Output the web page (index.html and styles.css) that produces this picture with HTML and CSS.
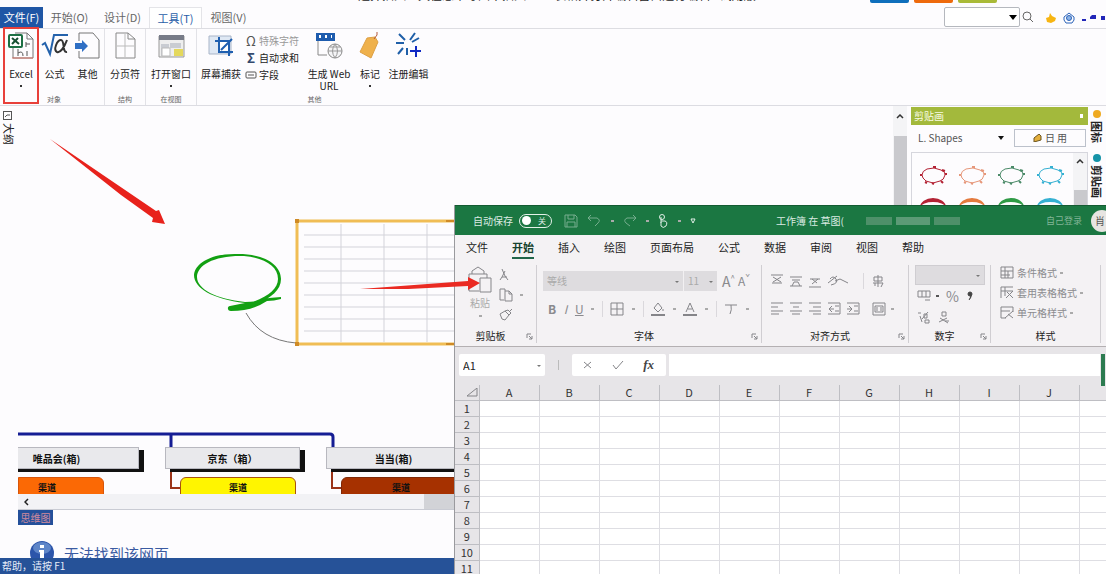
FILE: index.html
```html
<!DOCTYPE html>
<html lang="zh-CN">
<head>
<meta charset="utf-8">
<title>插入 Excel 表格</title>
<meta name="viewport" content="width=device-width, initial-scale=1">
<link rel="stylesheet" href="styles.css">
</head>
<body>
<div class="app">
  <header class="top">
    <div class="caption"><span class="caption-text">选择插入工具在思维导图中插入Excel表格并打开编辑窗口进行编辑 - 试用版</span>
      <div class="chips"><i class="chip blue"></i><i class="chip orange"></i><i class="chip green"></i></div>
    </div>
    <nav class="menu">
      <button class="file">文件(F)</button>
      <button>开始(O)</button>
      <button>设计(D)</button>
      <button class="on">工具(T)</button>
      <button>视图(V)</button>
      <div class="search">
        <select aria-label="搜索"><option></option></select>
        <svg width="12" height="12" viewBox="0 0 12 12" fill="none" stroke="#666"><circle cx="5" cy="5" r="4"/><path d="M8 8l3 3"/></svg>
      </div>
      <div class="tray">
        <svg width="10" height="10" viewBox="0 0 10 10"><path d="M4 0l2 3 4 2-1 3-4 2-4-1-1-4 3-1z" fill="#f7b512"/></svg>
        <svg width="12" height="12" viewBox="0 0 12 12" fill="none" stroke="#2b62b8"><path d="M6 1l5 4v3l-2 3H3L1 8V5z"/><circle cx="6" cy="6" r="2.5" fill="#8cb4e8"/></svg>
        <svg width="24" height="10" viewBox="0 0 24 10" fill="#2226b8"><path d="M0 6h4v2H0zM8 4l2-2h4v4H8zM19 3h4v4h-4z"/></svg>
      </div>
    </nav>
  </header>

  <section class="ribbon">
    <div class="group first">
      <div class="tools">
        <button class="tool marked">
          <svg class="ico" viewBox="0 0 28 28" fill="none"><path d="M8 1h12l6 6v19H6V16" stroke="#777"/><path d="M20 1v6h6" stroke="#777"/><path d="M5 26h21" stroke="#d9766a"/><rect x="2" y="3" width="13" height="12" rx="1" fill="#fff" stroke="#1d7044" stroke-width="2"/><path d="M5 6l7 6M11 6l-6 6" stroke="#174f32" stroke-width="2"/><path d="M19 10v5m0-3h4M11 17v7m0-3q5-3 5 3M20 19v5" stroke="#555"/></svg>
          <span>Excel</span><i class="dot"></i></button>
        <button class="tool">
          <svg class="ico" viewBox="0 0 28 28" fill="none"><path d="M1 13l3-2 5 11L13 3h14" stroke="#2462ac" stroke-width="2"/><path d="M26 8c-3 8-7 13-10 12-4-2 0-12 4-12 4 0 1 13 6 12" stroke="#333" stroke-width="2"/></svg>
          <span>公式</span></button>
        <button class="tool">
          <svg class="ico" viewBox="0 0 28 28" fill="none"><path d="M5 9V1h14l6 7v18H5v-7" stroke="#777"/><path d="M1 11h7V8l6 6-6 6v-3H1z" fill="#2f6fc4"/></svg>
          <span>其他</span></button>
      </div>
      <div class="name">对象</div>
    </div>
    <div class="group">
      <div class="tools"><button class="tool">
        <svg class="ico" viewBox="0 0 28 28" fill="none" stroke="#888"><path d="M5 1h12l7 6v19H5zM17 1v6h7"/><path d="M14 2v23M6 14h17" stroke="#bbb"/></svg>
        <span>分页符</span></button></div>
      <div class="name">结构</div>
    </div>
    <div class="group">
      <div class="tools"><button class="tool">
        <svg class="ico" viewBox="0 0 28 28"><path d="M2 4h25v21H2z" fill="#eee" stroke="#999"/><path d="M2 3h25v5H2z" fill="#777b88"/><path d="M4 12h8v12H4zM13 11h11v5H13z" fill="#c9ccd2"/><path d="M5 16h8v8H5z" fill="#fff" stroke="#bbb"/><path d="M17 17h9v7h-9z" fill="#e4d85c"/></svg>
        <span>打开窗口</span><i class="dot"></i></button></div>
      <div class="name">在视图</div>
    </div>
    <div class="group last">
      <div class="tools">
        <button class="tool w-shot">
          <svg class="ico" viewBox="0 0 28 28" fill="none"><path d="M2 4h22v18H2z" fill="#dfe8f4" stroke="#a9b5c8"/><path d="M11 9h11v10H11z" fill="#fff"/><path d="M12 5v15h14M8 9h14v15M14 18l11-11" stroke="#1f5fb0" stroke-width="2"/></svg>
          <span>屏幕捕获</span></button>
        <div class="rows">
          <button class="row dim"><b>Ω</b>特殊字符</button>
          <button class="row"><b>Σ</b>自动求和</button>
          <button class="row"><svg width="12" height="10" viewBox="0 0 12 10" fill="none" stroke="#555"><rect x="1" y="2" width="10" height="6" rx="1"/><path d="M3 5h6"/></svg>字段</button>
        </div>
        <button class="tool w-web">
          <svg class="ico" viewBox="0 0 28 28" fill="none"><path d="M3 9v14h9" stroke="#888"/><path d="M1 1h19v8H1z" fill="#1e5cae"/><path d="M4 3h2v3H4zm6 0h2v3h-2zm6 0h1v3h-1z" fill="#fff"/><circle cx="20" cy="19" r="7" stroke="#888" fill="#f4f4f6"/><path d="M13 19h14M20 12q-5 7 0 14M20 12q5 7 0 14M15 15h10" stroke="#999"/></svg>
          <span class="two">生成 Web<br>URL</span></button>
        <button class="tool w-tag">
          <svg class="ico" viewBox="0 0 28 28" fill="none"><path d="M11 6l8-1 3 5-7 16-11-6z" fill="#efb14c" stroke="#dda045"/><path d="M18 7l3-4V0" stroke="#b35a3c"/></svg>
          <span>标记</span><i class="dot"></i></button>
        <button class="tool w-edit">
          <svg class="ico" viewBox="0 0 28 28" fill="none" stroke="#1f5fa8" stroke-width="2"><path d="M4 2l6 6M20 1l-5 7M1 11h8M24 6l-7 4M8 16l-5 6M12 16v7"/><path d="M21 14v11M15 19h11" stroke="#1029c4"/></svg>
          <span>注册编辑</span></button>
      </div>
      <div class="name">其他</div>
    </div>
  </section>

  <main class="work">
    <aside class="rail left"><svg width="9" height="9" viewBox="0 0 9 9" fill="none" stroke="#555"><rect x=".5" y=".5" width="8" height="8"/><path d="M2 6l2-2h3"/></svg><span>大纲</span></aside>
    <div class="center">
      <div class="canvas">
        <svg class="draw" width="875" height="388" viewBox="18 106 875 388" fill="none">
          <path d="M244 256c-29-1-47 9-47 21 0 12 19 22 48 25q15 0 24-4l12-1v2q-7 2-14 2-15 10-36 10c-4 0-4-5-1-5l15-3C212 299 194 288 194 275c1-12 18-22 44-21 27 0 43 11 43 25 0 11-10 19-23 24l-5-1c16-6 25-14 25-23 0-13-14-21-34-23z" fill="#12a012"/>
          <path d="M246 313q15 27 50 30" stroke="#777"/>
          <path d="M304 235h150M304 247h150M304 259h150M304 271h150M304 283h150M304 295h150M304 307h150M304 319h150M304 331h150M341 224v118M384 224v118M427 224v118" stroke="#d3d3da"/>
          <path d="M470 221H297v123h173" stroke="#f0bd55" stroke-width="3"/>
          <path d="M295 219h4v4h-4zM295 342h4v4h-4zM446 220h8v2h-8zM446 343h8v2h-8z" fill="#cf8a26"/>
          <path d="M18 434h312q3 0 3 3v10M171 434v13" stroke="#151d94" stroke-width="3"/>
          <path d="M171 470v18h9M332 470v18h9" stroke="#9b3318" stroke-width="2"/>
        </svg>
        <div class="node n1">唯品会(箱)</div>
        <div class="node n2">京东（箱）</div>
        <div class="node n3">当当(箱)</div>
        <div class="leaf l1">渠道</div>
        <div class="leaf l2">渠道</div>
        <div class="leaf l3">渠道</div>
      </div>
      <div class="hscroll"><button aria-label="向左"><svg width="5" height="8" viewBox="0 0 5 8" fill="none" stroke="#222" stroke-width="1.5"><path d="M4 1L1 4l3 3"/></svg></button><i></i></div>
      <div class="sheets"><button>思维图</button></div>
      <div class="browser">
        <svg width="24" height="24" viewBox="0 0 24 24"><circle cx="12" cy="12" r="12" fill="#2c55aa"/><ellipse cx="12" cy="7" rx="9" ry="6" fill="#5f86c8"/><path d="M10 4h4v3h-4zM9 9h5v9h2v2H8v-2h2v-7H9z" fill="#fff"/></svg>
        <h1>无法找到该网页</h1>
      </div>
    </div>
    <div class="vscroll"><svg width="8" height="5" viewBox="0 0 8 5" fill="none" stroke="#333" stroke-width="1.5"><path d="M1 4l3-3 3 3"/></svg><i></i></div>
    <aside class="panel">
      <div class="panel-head"><span>剪贴画</span><i></i></div>
      <div class="panel-bar">
        <select aria-label="图库"><option>L. Shapes</option></select>
        <button><svg width="9" height="8" viewBox="0 0 9 8"><path d="M1 4l5-4 2 2v4l-7 2z" fill="#e4af3c" stroke="#6b5420"/></svg>日 用</button>
      </div>
      <div class="gallery">
        <div class="shapes">
          <svg class="c1" viewBox="0 0 28 20"><path d="M2 10q0-4 5-6l7-1 7 2q5 2 4 5-1 5-5 6l-7 2-7-2q-4-3-4-6z"/><path class="d" d="M13 2h3M22 5l3 1M25 9h2M21 16l2 2M12 18l2 1M5 17l2 1M0 10h2"/></svg>
          <svg class="c2" viewBox="0 0 28 20"><path d="M2 10q0-4 5-6l7-1 7 2q5 2 4 5-1 5-5 6l-7 2-7-2q-4-3-4-6z"/><path class="d" d="M13 2h3M22 5l3 1M25 9h2M21 16l2 2M12 18l2 1M5 17l2 1M0 10h2"/></svg>
          <svg class="c3" viewBox="0 0 28 20"><path d="M2 10q0-4 5-6l7-1 7 2q5 2 4 5-1 5-5 6l-7 2-7-2q-4-3-4-6z"/><path class="d" d="M13 2h3M22 5l3 1M25 9h2M21 16l2 2M12 18l2 1M5 17l2 1M0 10h2"/></svg>
          <svg class="c4" viewBox="0 0 28 20"><path d="M2 10q0-4 5-6l7-1 7 2q5 2 4 5-1 5-5 6l-7 2-7-2q-4-3-4-6z"/><path class="d" d="M13 2h3M22 5l3 1M25 9h2M21 16l2 2M12 18l2 1M5 17l2 1M0 10h2"/></svg>
          <i class="oval c1"></i><i class="oval c2"></i><i class="oval c3"></i><i class="oval c4"></i>
        </div>
        <div class="vscroll small"><svg width="8" height="5" viewBox="0 0 8 5" fill="none" stroke="#333" stroke-width="1.5"><path d="M1 4l3-3 3 3"/></svg><i></i></div>
      </div>
    </aside>
    <aside class="rail right"><i class="ball amber"></i><span>图标</span><i class="ball teal"></i><span>剪贴画</span></aside>
  </main>
  <footer class="status">帮助，请按 F1</footer>
</div>

<section class="excel">
  <div class="x-title">
    <label class="auto" for="autosave">自动保存</label>
    <span class="toggle"><input type="checkbox" id="autosave"><span>关</span></span>
    <div class="quick">
      <svg width="14" height="14" viewBox="0 0 14 14"><path d="M1 1h10l2 2v10H1zM4 1v4h6V1M3 13V8h8v5"/></svg>
      <svg width="14" height="12" viewBox="0 0 14 12"><path d="M1 3h9q4 2 1 5l-3 3M1 3l3-3M1 3l3 3"/></svg><i class="caret"></i>
      <svg width="14" height="12" viewBox="0 0 14 12"><path d="M13 3H4Q0 5 3 8l4 3M13 3l-3-3M13 3l-3 3"/></svg><i class="caret"></i>
      <svg class="bright" width="10" height="14" viewBox="0 0 10 14"><circle cx="4" cy="3" r="2.500"/><path d="M3 3v6M3 7h4q3 1 1 5-3 3-5 0V8"/></svg><i class="caret"></i>
      <svg class="bright" width="6" height="6" viewBox="0 0 6 6"><path d="M1 1h4L3 5z"/></svg>
    </div>
    <div class="doc">工作簿 在 草图(</div>
    <div class="mask"><i></i><i></i><i></i></div>
    <div class="user">自己登录</div>
    <div class="avatar">肖</div>
  </div>
  <nav class="x-tabs">
    <button>文件</button><button class="on">开始</button><button>插入</button><button>绘图</button><button>页面布局</button><button>公式</button><button>数据</button><button>审阅</button><button>视图</button><button>帮助</button>
  </nav>
  <div class="x-ribbon">
    <div class="xg clip">
      <div class="xbody">
        <button class="paste"><svg width="26" height="28" viewBox="0 0 26 28"><path d="M2 8h3V5l6-4 6 4v3h3v4M2 8v17h10M5 8h12"/><path d="M13 12h11v14H13z"/></svg><span>粘贴</span><i class="caret"></i></button>
        <div class="stack">
          <svg width="10" height="14" viewBox="0 0 10 14"><path d="M3 1l3 7 3 4M6 3L3 9l-2 3M3 9h5"/></svg>
          <span><svg width="14" height="14" viewBox="0 0 14 14"><path d="M6 3V1H1v11h4M6 3h4l3 3v7H6zM10 3v3h3"/></svg><i class="caret"></i></span>
          <svg width="14" height="13" viewBox="0 0 14 13"><path d="M1 6l5-3 4 4-4 5-3-1zM6 3l4 4 2-2-3-3zM11 3l2-2"/></svg>
        </div>
      </div>
      <div class="xname"><span>剪贴板</span><svg width="7" height="7" viewBox="0 0 7 7"><path d="M1 5V1h4M3 3l3 3M6 3v3H3"/></svg></div>
    </div>
    <div class="xg font">
      <div class="xbody col">
        <div class="line"><span class="pick fam"><select aria-label="字体"><option>等线</option></select></span><span class="pick size"><select aria-label="字号"><option>11</option></select></span><button class="big">A<sup>^</sup></button><button class="mid">A<sup>ˇ</sup></button></div>
        <div class="line spread">
          <button><b>B</b></button><button><em>I</em></button><button><u>U</u></button><i class="caret"></i><i class="bar"></i>
          <svg width="14" height="14" viewBox="0 0 14 14"><path d="M1 1h12v12H1zM7 1v12M1 7h12"/></svg><i class="caret"></i><i class="bar"></i>
          <svg width="14" height="14" viewBox="0 0 14 14"><path d="M3 6l4-5 4 5-4 4zM12 7v2"/><path d="M0 13h14" stroke-width="2"/></svg><i class="caret"></i>
          <svg width="14" height="14" viewBox="0 0 14 14"><path d="M3 10L7 1l4 9M5 7h4"/><path d="M0 13h14" stroke-width="2"/></svg><i class="caret"></i><i class="bar"></i>
          <svg width="14" height="14" viewBox="0 0 14 14"><path d="M1 3h12M7 3q1 5-1 9"/></svg><i class="caret"></i>
        </div>
      </div>
      <div class="xname"><span>字体</span><svg width="7" height="7" viewBox="0 0 7 7"><path d="M1 5V1h4M3 3l3 3M6 3v3H3"/></svg></div>
    </div>
    <div class="xg align">
      <div class="xbody col">
        <div class="line five">
          <svg width="14" height="14" viewBox="0 0 14 14"><path d="M1 1h12M3 3l8 5M11 3L3 8M2 9h10"/></svg>
          <svg width="14" height="14" viewBox="0 0 14 14"><path d="M1 3h12M3 6h8M5 8h4l2 4M5 8l-2 4M1 12h12"/></svg>
          <svg width="14" height="14" viewBox="0 0 14 14"><path d="M2 5h10M4 5l5 4M10 5l-6 5M1 13h12"/></svg>
          <svg width="22" height="14" viewBox="0 0 22 14"><path d="M1 9l9-7M3 5q3-4 6 0t-5 6M8 7l5-2 8 4"/></svg>
          <i class="bar wide"></i>
          <svg width="14" height="14" viewBox="0 0 14 14"><path d="M3 3h8v4H3zM7 1v12M2 9h10l-2 4M4 9v3"/></svg>
        </div>
        <div class="line five">
          <svg width="14" height="14" viewBox="0 0 14 14"><path d="M1 1h12M1 5h7M1 9h12M1 12h8"/></svg>
          <svg width="14" height="14" viewBox="0 0 14 14"><path d="M1 1h12M4 5h6M1 9h12M3 12h8"/></svg>
          <svg width="14" height="14" viewBox="0 0 14 14"><path d="M1 1h12M5 5h8M1 9h12M5 12h8"/></svg>
          <svg width="14" height="14" viewBox="0 0 14 14"><path d="M1 1h12v11H1M8 4h4M8 9h4M5 4L2 7l3 3M2 7h5"/></svg>
          <svg width="14" height="14" viewBox="0 0 14 14"><path d="M1 1h12v11H1M8 4h4M8 9h4M3 4l3 3-3 3M1 7h5"/></svg>
          <svg class="merge" width="14" height="14" viewBox="0 0 14 14"><path d="M1 1h12v12H1zM3 4h8v6H3zM5 5v4M9 5v4"/></svg><i class="caret"></i>
        </div>
      </div>
      <div class="xname"><span>对齐方式</span><svg width="7" height="7" viewBox="0 0 7 7"><path d="M1 5V1h4M3 3l3 3M6 3v3H3"/></svg></div>
    </div>
    <div class="xg num">
      <div class="xbody col">
        <span class="pick fmt"><select aria-label="数字格式"><option></option></select></span>
        <div class="line nums"><svg width="14" height="12" viewBox="0 0 14 12"><path d="M1 1h12v6H1zM5 1v6M9 1v6M8 10h5"/></svg><i class="caret dark"></i><button class="big">%</button><svg class="comma" width="6" height="10" viewBox="0 0 6 10"><circle cx="3" cy="3" r="2"/><path d="M4 3q1 3-2 6"/></svg></div>
        <div class="line deci"><svg width="14" height="13" viewBox="0 0 14 13"><path d="M1 2h3M3 5l2 6M7 3h3v4H7zM8 9h4v3H8zM11 1L5 8"/></svg><svg width="14" height="13" viewBox="0 0 14 13"><path d="M5 1h4v4H5zM2 11l8-4M3 7l8 5M8 10h4"/></svg></div>
      </div>
      <div class="xname"><span>数字</span><svg width="7" height="7" viewBox="0 0 7 7"><path d="M1 5V1h4M3 3l3 3M6 3v3H3"/></svg></div>
    </div>
    <div class="xg style">
      <div class="xbody col list">
        <button><svg width="14" height="13" viewBox="0 0 14 13"><path d="M1 1h12v11H1zM5 1v11M1 5h12M8 5v7M1 9h9"/></svg>条件格式<i class="caret"></i></button>
        <button><svg width="14" height="13" viewBox="0 0 14 13"><path d="M1 1h12M1 1v11M5 1v9M1 5h12M6 12l7-7M7 6l6 6"/></svg>套用表格格式<i class="caret"></i></button>
        <button><svg width="14" height="13" viewBox="0 0 14 13"><path d="M1 1h12v5M1 1v11h5M1 5h9M5 12l8-7M8 8l5 4"/></svg>单元格样式<i class="caret"></i></button>
      </div>
      <div class="xname"><span>样式</span></div>
    </div>
  </div>
  <div class="fbar">
    <span class="pick cellname"><select aria-label="名称框"><option>A1</option></select></span>
    <i class="grip"></i>
    <div class="fx">
      <svg width="10" height="10" viewBox="0 0 10 10"><path d="M1 2l7 6M8 2L1 8"/></svg>
      <svg width="12" height="10" viewBox="0 0 12 10"><path d="M1 5l3 4 7-8"/></svg>
      <button aria-label="插入函数"><em>fx</em></button>
    </div>
    <input class="formula" type="text" aria-label="编辑栏">
  </div>
  <div class="sheet">
    <table>
      <thead><tr><th class="corner"><svg width="12" height="9" viewBox="0 0 12 9"><path d="M11 0v8H1z"/></svg></th><th>A</th><th>B</th><th>C</th><th>D</th><th>E</th><th>F</th><th>G</th><th>H</th><th>I</th><th>J</th><th></th></tr></thead>
      <tbody>
        <tr><th>1</th><td></td><td></td><td></td><td></td><td></td><td></td><td></td><td></td><td></td><td></td><td></td></tr>
        <tr><th>2</th><td></td><td></td><td></td><td></td><td></td><td></td><td></td><td></td><td></td><td></td><td></td></tr>
        <tr><th>3</th><td></td><td></td><td></td><td></td><td></td><td></td><td></td><td></td><td></td><td></td><td></td></tr>
        <tr><th>4</th><td></td><td></td><td></td><td></td><td></td><td></td><td></td><td></td><td></td><td></td><td></td></tr>
        <tr><th>5</th><td></td><td></td><td></td><td></td><td></td><td></td><td></td><td></td><td></td><td></td><td></td></tr>
        <tr><th>6</th><td></td><td></td><td></td><td></td><td></td><td></td><td></td><td></td><td></td><td></td><td></td></tr>
        <tr><th>7</th><td></td><td></td><td></td><td></td><td></td><td></td><td></td><td></td><td></td><td></td><td></td></tr>
        <tr><th>8</th><td></td><td></td><td></td><td></td><td></td><td></td><td></td><td></td><td></td><td></td><td></td></tr>
        <tr><th>9</th><td></td><td></td><td></td><td></td><td></td><td></td><td></td><td></td><td></td><td></td><td></td></tr>
        <tr><th>10</th><td></td><td></td><td></td><td></td><td></td><td></td><td></td><td></td><td></td><td></td><td></td></tr>
        <tr><th>11</th><td></td><td></td><td></td><td></td><td></td><td></td><td></td><td></td><td></td><td></td><td></td></tr>
      </tbody>
    </table>
  </div>
  <i class="edge"></i>
</section>

<svg class="arrows" width="490" height="300" viewBox="0 0 490 300">
  <path d="M50 139l106 72 3-1 6 14-13-2 1-4-32-23z" fill="#e8221c"/>
  <path d="M360 289l108-8v-4l12 6-12 7v-4l-60 3z" fill="#ea2a22"/>
</svg>
</body>
</html>
```
FILE: styles.css
```css
* { box-sizing: border-box; }
body { margin: 0; height: 100vh; overflow: hidden; position: relative; background: #fdfcfe; color: #222; font: 10px/14px "Noto Sans CJK SC", "Noto Sans", sans-serif; }
button, select, input { font: inherit; color: inherit; border: 0; padding: 0; margin: 0; background: none; border-radius: 0; }
select { appearance: none; }
svg { display: block; flex: none; }
i { font-style: normal; }

.app { height: 100%; display: flex; flex-direction: column; }

.caption { height: 7px; display: flex; justify-content: flex-end; align-items: flex-end; overflow: hidden; }
.caption-text { margin: 0 120px 4px 0; width: 392px; white-space: nowrap; font-size: 12px; line-height: 16px; }
.chips { display: flex; gap: 5px; margin-right: 109px; align-self: flex-start; }
.chip { width: 39px; height: 3px; border-radius: 0 0 2px 2px; }
.chip.blue { background: #0f6fbc; }
.chip.orange { background: #ee6a0c; }
.chip.green { background: #a9ba38; }

.menu { display: flex; height: 22px; border-bottom: 1px solid #dddde2; color: #666; }
.menu button { font-size: 11px; line-height: 21px; width: 53px; }
.menu .file { width: 43px; background: #1f56a5; color: #fff; }
.menu .on { color: #2a5ea8; background: #fff; border: 1px solid #e4e4e8; border-bottom: 0; }
.search { position: relative; margin-left: auto; display: flex; gap: 2px; align-items: flex-start; }
.search select { width: 76px; height: 20px; border: 1px solid #b5b8be; border-radius: 2px; background: #fff; }
.search::after { content: ""; position: absolute; right: 17px; top: 8px; border: 4px solid transparent; border-top: 5px solid #000; border-bottom: 0; }
.search svg { margin-top: 4px; }
.tray { display: flex; align-items: center; gap: 7px; margin-left: 12px; }

.ribbon { display: flex; height: 77px; flex: none; border-bottom: 1px solid #dcdce2; }
.group { display: flex; flex-direction: column; justify-content: space-between; border-right: 1px solid #e2e2e7; padding-top: 3px; }
.group.first { padding-left: 4px; }
.group:nth-child(2) { width: 41px; }
.group:nth-child(3) { width: 51px; }
.group.last { border-right: 0; }
.tools { display: flex; justify-content: center; }
.tool { display: flex; flex-direction: column; align-items: center; width: 33px; white-space: nowrap; line-height: 12px; }
.tool .ico { width: 28px; height: 28px; margin-bottom: 8px; }
.tool.marked { outline: 2px solid #e8403a; outline-offset: -1px; height: 75px; margin: -4px 0 -14px; padding-top: 4px; width: 34px; }
.w-shot { width: 48px; }
.w-web { width: 52px; }
.two { line-height: 12px; }
.w-tag { width: 30px; }
.w-edit { width: 47px; }
.dot { width: 2px; height: 2px; margin-top: 5px; background: #333; }
.rows { display: flex; flex-direction: column; width: 58px; }
.row { display: flex; align-items: center; height: 17px; white-space: nowrap; gap: 2px; }
.row b { width: 12px; font-size: 13px; color: #34496d; }
.row.dim { color: #999; }
.row.dim b { font-weight: 400; color: #555; }
.name { text-align: center; font-size: 7px; line-height: 12px; color: #666; }

.work { flex: 1; min-height: 0; display: flex; }
.rail { width: 18px; flex: none; display: flex; flex-direction: column; align-items: center; gap: 3px; padding-top: 5px; }
.rail.left { align-items: flex-start; padding-left: 3px; }
.rail span { writing-mode: vertical-rl; text-orientation: sideways; font-size: 11px; line-height: 12px; }
.rail.right { padding-top: 4px; font-weight: 700; }
.ball { width: 8px; height: 8px; border-radius: 50%; }
.amber { background: #efaa21; }
.teal { background: #1593a7; margin-top: 8px; }

.center { flex: 1; min-width: 0; display: flex; flex-direction: column; }
.canvas { flex: 1; min-height: 0; position: relative; overflow: hidden; }
.draw { position: absolute; left: 0; top: 0; }
.node, .leaf { position: absolute; text-align: center; font-weight: 700; color: #111; }
.node { height: 22px; line-height: 21px; background: #e9e9ec; border: 1px solid #b8b8bf; box-shadow: 5px 3px 0 #111; }
.n1 { left: -6px; top: 341px; width: 127px; padding-right: 42px; padding-left: 4px; }
.n2 { left: 147px; top: 341px; width: 135px; }
.n3 { left: 308px; top: 341px; width: 135px; }
.leaf { height: 20px; top: 371px; font-size: 9px; line-height: 20px; border: 1px solid; border-radius: 6px 6px 0 0; }
.l1 { left: 0; width: 86px; background: #fb6905; border-color: #d8550a; border-top-left-radius: 0; padding-right: 28px; }
.l2 { left: 162px; width: 116px; background: #fff500; border-color: #a9530d; }
.l3 { left: 323px; width: 120px; background: #a63100; border-color: #7f2806; }
.hscroll { height: 16px; flex: none; display: flex; background: #f2f2f5; border-bottom: 1px solid #c9cbd3; }
.hscroll button { width: 16px; display: flex; align-items: center; justify-content: center; }
.hscroll i { margin-left: 390px; width: 120px; background: #d2d3d7; }
.sheets { height: 16px; flex: none; }
.sheets button { width: 35px; height: 15px; background: #24509a; color: #d08a9c; display: block; line-height: 14px; }
.browser { height: 32px; flex: none; display: flex; gap: 10px; padding: 15px 0 0 12px; overflow: hidden; }
.browser h1 { margin: 0; font-size: 15px; line-height: 26px; font-weight: 400; color: #3b5ba2; }

.vscroll { width: 14px; flex: none; background: #f4f4f6; display: flex; flex-direction: column; align-items: center; padding-top: 8px; gap: 17px; }
.vscroll i { width: 13px; flex: 1; background: #c9c9cd; }
.vscroll.small { padding-top: 6px; gap: 26px; }

.panel { width: 177px; margin: 1px 0 0 4px; flex: none; display: flex; flex-direction: column; }
.panel-head { height: 18px; flex: none; background: #a3b93c; color: #f8fbe3; display: flex; align-items: center; justify-content: space-between; padding: 0 5px 0 3px; }
.panel-head i { width: 3px; height: 4px; background: #fff; }
.panel-bar { position: relative; height: 27px; flex: none; display: flex; gap: 6px; padding: 4px 2px 5px 3px; }
.panel-bar select { flex: 1; padding-left: 4px; color: #555; }
.panel-bar::before { content: ""; position: absolute; left: 87px; top: 11px; border: 3px solid transparent; border-top: 4px solid #111; border-bottom: 0; }
.panel-bar button { width: 72px; height: 18px; border: 1px solid #bcc1cb; display: flex; gap: 3px; align-items: center; justify-content: center; color: #555; }
.gallery { flex: 1; min-height: 0; display: flex; border: 1px solid #d6d6dd; }
.shapes { flex: 1; display: grid; grid-template-columns: repeat(4, 28px); grid-auto-rows: 20px; gap: 13px 11px; padding: 12px 8px; overflow: hidden; }
.shapes svg { width: 28px; height: 20px; fill: none; stroke: currentColor; }
.shapes .d { stroke-width: 2; }
.oval { width: 26px; height: 18px; border: 1px solid currentColor; border-top-width: 4px; border-radius: 50%; }
.c1 { color: #b32234; }
.c2 { color: #e6977a; }
.c3 { color: #4b8a68; }
.c4 { color: #35b0d2; }
.oval.c2 { color: #e47a3e; }
.oval.c3 { color: #2f9a45; }

.status { height: 16px; flex: none; background: #265298; color: #e6edf8; padding-left: 2px; line-height: 16px; }

.excel { position: absolute; left: 454px; top: 205px; right: 0; bottom: 0; display: flex; flex-direction: column; overflow: hidden; background: #f4f2f4; border-left: 1px solid #9a9a9e; }
.excel svg { fill: none; stroke: #858589; }
.x-title { height: 30px; flex: none; background: #1b7742; border-top: 1px solid #145b32; color: #dcebe2; display: flex; align-items: center; padding-left: 18px; white-space: nowrap; }
.toggle { width: 33px; height: 14px; margin-left: 6px; border: 1px solid #e4f1e9; border-radius: 7px; display: flex; align-items: center; justify-content: space-between; padding: 0 5px 0 2px; font-size: 8px; }
.toggle input { appearance: none; width: 9px; height: 9px; border-radius: 50%; background: #fff; }
.quick { display: flex; align-items: center; justify-content: space-between; width: 132px; margin-left: 12px; }
.excel .quick svg { stroke: #76ae8e; }
.excel .quick .bright { stroke: #e0eee6; }
.caret { width: 3px; height: 2px; background: #aaa; flex: none; }
.caret.dark { background: #555; }
.doc { margin-left: 80px; width: 90px; }
.mask { display: flex; gap: 4px; }
.mask i { height: 8px; width: 26px; background: #4e9069; }
.mask i:nth-child(2) { width: 34px; background: #5c9a76; }
.user { margin-left: auto; color: #83b598; font-size: 9px; }
.avatar { width: 22px; height: 22px; line-height: 22px; margin: 0 -7px 0 9px; border-radius: 50%; background: #e7e5e2; color: #555; font-size: 10px; padding-left: 4px; flex: none; }

.x-tabs { height: 26px; flex: none; display: flex; gap: 24px; padding-left: 11px; align-items: flex-start; font-size: 11px; white-space: nowrap; }
.x-tabs button { height: 24px; line-height: 24px; }
.x-tabs .on { font-weight: 700; border-bottom: 2px solid #21664a; color: #16422e; }

.x-ribbon { display: flex; height: 86px; flex: none; padding-top: 4px; border-bottom: 1px solid #b4b0b2; }
.xg { display: flex; flex-direction: column; justify-content: space-between; border-right: 1px solid #d0ced2; margin-bottom: 3px; flex: none; }
.xbody { display: flex; height: 62px; }
.xbody.col { flex-direction: column; gap: 8px; padding-top: 6px; }
.xname { display: flex; align-items: center; line-height: 12px; height: 14px; }
.xname span { flex: 1; text-align: center; }
.xname svg { margin-right: 3px; }
.clip { width: 82px; }
.clip .xname { padding-right: 10px; padding-right: 0; }
.font { width: 225px; }
.align { width: 147px; }
.num { width: 82px; }
.style { width: 110px; }
.paste { width: 26px; margin-left: 12px; display: flex; flex-direction: column; align-items: center; color: #aaa; padding-top: 1px; }
.paste span { line-height: 18px; }
.paste .caret { margin-top: 3px; }
.stack { display: flex; flex-direction: column; gap: 6px; padding: 3px 0 0 6px; }
.stack span { display: flex; align-items: center; gap: 7px; }
.line { display: flex; align-items: center; height: 20px; color: #8a8a8e; }
.font .line { padding-left: 6px; }
.pick { position: relative; display: block; flex: none; }
.pick select { display: block; width: 100%; height: 100%; padding-left: 4px; }
.pick::after { content: ""; position: absolute; right: 4px; top: 50%; border: 2px solid transparent; border-top: 2px solid #777; border-bottom: 0; }
.fam, .size { height: 20px; background: #dedcdf; color: #aaa; }
.fam { width: 141px; border-right: 1px solid #f2f0f2; }
.size { width: 33px; }
.big { font-size: 14px; margin-left: 5px; }
.mid { font-size: 12px; margin-left: 3px; }
.big sup, .mid sup { font-size: 8px; line-height: 0; }
.spread { justify-content: space-between; padding-right: 12px; }
.font .spread { padding-left: 11px; }
.spread button { font-size: 12px; }
.bar { width: 1px; height: 16px; background: #dad8dc; flex: none; }
.wide { margin: 0 2px 0 9px; }
.five { gap: 5px; padding-left: 8px; }
.merge { margin-left: 7px; }
.num .xbody { padding: 0 6px; gap: 1px; }
.fmt { height: 20px; width: 70px; background: #dedcdf; border: 1px solid #cfcdd1; }
.nums { gap: 5px; padding-left: 2px; }
.nums .big { margin-left: 2px; }
.excel .comma { margin-left: 3px; stroke: #444; fill: #444; }
.deci { gap: 6px; padding-left: 2px; }
.list.col { gap: 5px; padding: 0 0 0 9px; }
.list button { display: flex; align-items: center; gap: 3px; height: 15px; white-space: nowrap; color: #8b8b8f; }

.fbar { height: 38px; flex: none; display: flex; align-items: center; background: #e7e5e8; padding: 0 6px 2px 4px; }
.cellname { width: 86px; height: 22px; background: #fff; border-radius: 2px; font-size: 11px; }
.grip { width: 1px; height: 10px; background: #bbb; margin: 0 13px; }
.fx { width: 94px; height: 22px; background: #fff; display: flex; align-items: center; justify-content: space-between; padding: 0 12px 0 11px; border-radius: 2px; }
.fx button { font: 700 13px/20px "Liberation Serif", serif; color: #444; }
.formula { flex: 1; min-width: 0; height: 22px; background: #fff; margin-left: 3px; }

.sheet { flex: 1; min-height: 0; overflow: hidden; background: #fff; }
.sheet table { border-collapse: collapse; table-layout: fixed; width: 684px; }
.sheet th, .sheet td { height: 16px; padding: 0; border: 1px solid #dedee3; border-width: 0 1px 1px 0; overflow: hidden; }
.sheet th { background: #e7e5e8; font-size: 11px; line-height: 14px; font-weight: 400; color: #333; border-color: #bebec3; }
.sheet thead th { height: 15px; line-height: 13px; width: 60px; }
.sheet th.corner { width: 24px; }
.corner svg { margin-left: auto; margin-right: 1px; }
.edge { position: absolute; right: 1px; top: 149px; width: 4px; height: 32px; background: #2c7b50; }

.arrows { position: absolute; left: 0; top: 0; pointer-events: none; }
```
